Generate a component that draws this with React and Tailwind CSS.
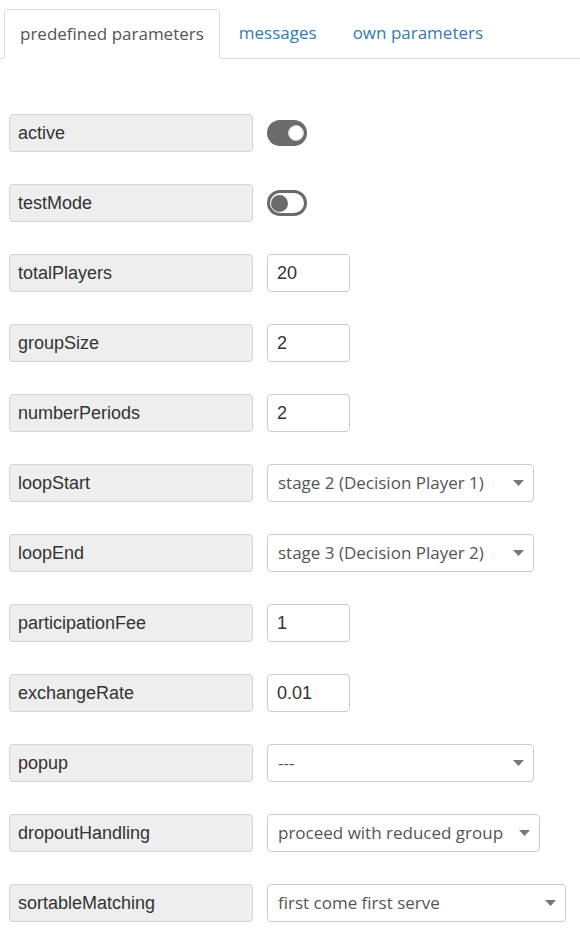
import { useState } from 'react'

// ─── Parámetros predefinidos ─────────────────────────────────────────────────
const filas = [
  { nombre: 'active', tipo: 'toggle', valor: true },
  { nombre: 'testMode', tipo: 'toggle', valor: false },
  { nombre: 'totalPlayers', tipo: 'input', valor: '20' },
  { nombre: 'groupSize', tipo: 'input', valor: '2' },
  { nombre: 'numberPeriods', tipo: 'input', valor: '2' },
  { nombre: 'loopStart', tipo: 'select', valor: 'stage 2 (Decision Player 1)', ancho: 'w-[267px]' },
  { nombre: 'loopEnd', tipo: 'select', valor: 'stage 3 (Decision Player 2)', ancho: 'w-[267px]' },
  { nombre: 'participationFee', tipo: 'input', valor: '1' },
  { nombre: 'exchangeRate', tipo: 'input', valor: '0.01' },
  { nombre: 'popup', tipo: 'select', valor: '---', ancho: 'w-[267px]' },
  { nombre: 'dropoutHandling', tipo: 'select', valor: 'proceed with reduced group', ancho: 'w-[273px]' },
  { nombre: 'sortableMatching', tipo: 'select', valor: 'first come first serve', ancho: 'w-[299px]' },
]

const arial = "font-['Liberation_Sans',Arial,sans-serif]"
const openSans = "font-['Open_Sans',sans-serif]"

function Toggle({ activo }) {
  if (activo) {
    return (
      <div className="w-[40px] h-[26px] rounded-full bg-[#6b6b6b] flex items-center justify-end pr-[3px]">
        <div className="w-[16px] h-[16px] rounded-full bg-white border border-[#cfcfcf]" />
      </div>
    )
  }
  return (
    <div className="w-[40px] h-[26px] rounded-full border-[3px] border-[#6b6b6b] flex items-center pl-[1px]">
      <div className="w-[17px] h-[17px] rounded-full bg-[#6b6b6b]" />
    </div>
  )
}

function Fila({ fila }) {
  return (
    <div className="flex items-center gap-[14px]">
      <div className={`w-[244px] h-[38px] rounded-[4px] bg-[#eeeeee] border border-[#d4d4d4] flex items-center pl-[8px] text-[18px] text-[#333] ${arial}`}>
        {fila.nombre}
      </div>

      {fila.tipo === 'toggle' && <Toggle activo={fila.valor} />}

      {fila.tipo === 'input' && (
        <div className={`w-[83px] h-[38px] rounded-[4px] border border-[#cccccc] bg-white flex items-center pl-[9px] text-[18px] text-[#333] ${arial}`}>
          {fila.valor}
        </div>
      )}

      {fila.tipo === 'select' && (
        <div className={`${fila.ancho} h-[38px] rounded-[4px] border border-[#cccccc] bg-white flex items-center justify-between pl-[10px] pr-[9px] text-[17px] text-[#555] ${openSans}`}>
          <span>{fila.valor}</span>
          <svg width="11" height="6" viewBox="0 0 11 6">
            <path d="M0 0 L11 0 L5.5 6 Z" fill="#777" />
          </svg>
        </div>
      )}
    </div>
  )
}

export default function App() {
  const [tab] = useState('predefined')

  return (
    <div className="w-[580px] min-h-[932px] bg-white">
      {/* Pestañas */}
      <div className={`pt-[8px] border-b border-[#dddddd] flex items-end text-[17px] ${openSans}`}>
        <div className={`ml-[4px] h-[50px] px-[15px] flex items-center rounded-t-[4px] border border-[#dddddd] border-b-white -mb-px bg-white ${tab === 'predefined' ? 'text-[#555]' : ''}`}>
          predefined parameters
        </div>
        <div className="ml-[19px] h-[50px] flex items-center text-[#337ab7]">messages</div>
        <div className="ml-[36px] h-[50px] flex items-center text-[#337ab7]">own parameters</div>
      </div>

      {/* Formulario */}
      <div className="pt-[55px] pl-[9px] flex flex-col gap-[32px]">
        {filas.map(f => <Fila key={f.nombre} fila={f} />)}
      </div>
    </div>
  )
}
